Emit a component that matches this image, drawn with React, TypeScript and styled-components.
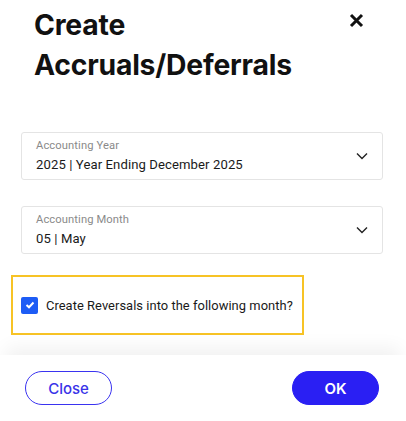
import React from "react"
import styled, { createGlobalStyle } from "styled-components"

const GlobalStyle = createGlobalStyle`
  html, body {
    margin: 0;
    padding: 0;
    background: #ffffff;
  }
  body {
    font-family: "Roboto", "Liberation Sans", sans-serif;
    color: #1a1a1a;
  }
`

const Dialog = styled.div`
  width: 406px;
  height: 421px;
  display: flex;
  flex-direction: column;
  background: #fff;
  overflow: hidden;
`

const Header = styled.div`
  display: flex;
  justify-content: space-between;
  align-items: flex-start;
  padding: 5px 42px 0 34px;
`

const Title = styled.h1`
  margin: 0;
  font-family: "Inter", "Liberation Sans", sans-serif;
  font-size: 28.3px;
  font-weight: 700;
  line-height: 40px;
  color: #111;
  letter-spacing: -0.2px;
`

const CloseIcon = styled.button`
  border: none;
  background: none;
  padding: 0;
  margin-top: 8px;
  width: 15px;
  height: 15px;
  cursor: pointer;
  display: flex;
`

const Body = styled.div`
  flex: 1;
  display: flex;
  flex-direction: column;
  padding: 47px 23px 0 21px;
`

const Field = styled.div`
  display: flex;
  align-items: center;
  justify-content: space-between;
  height: 46px;
  border: 1px solid #e4e4e4;
  border-radius: 3px;
  padding: 0 14px;
  margin-bottom: 26px;
`

const FieldText = styled.div`
  display: flex;
  flex-direction: column;
  gap: 3px;
`

const Label = styled.span`
  font-size: 11.2px;
  color: #8a8a8a;
  line-height: 14px;
  letter-spacing: 0.1px;
`

const Value = styled.span`
  font-size: 13.1px;
  color: #1a1a1a;
  line-height: 18px;
  letter-spacing: 0.1px;
`

const Highlight = styled.label`
  display: flex;
  align-items: center;
  gap: 8px;
  width: 293px;
  height: 60px;
  margin-left: -10px;
  margin-top: -5px;
  padding-left: 8px;
  border: 2px solid #f7c325;
  box-sizing: border-box;
`

const Box = styled.span`
  flex-shrink: 0;
  width: 17px;
  height: 17px;
  border-radius: 2px;
  background: #1d5cf5;
  display: flex;
  align-items: center;
  justify-content: center;
`

const CheckText = styled.span`
  font-size: 12.9px;
  color: #1a1a1a;
  white-space: nowrap;
  letter-spacing: 0.05px;
`

const Footer = styled.div`
  height: 66px;
  display: flex;
  align-items: center;
  justify-content: space-between;
  padding: 0 27px 0 25px;
  background: #fff;
  box-shadow: 0 -14px 18px -6px rgba(0, 0, 0, 0.055);
`

const Button = styled.button<{ $primary?: boolean }>`
  width: 87px;
  height: 34px;
  border-radius: 17px;
  font-family: "Inter", "Liberation Sans", sans-serif;
  font-size: 15px;
  font-weight: ${(p) => (p.$primary ? 600 : 500)};
  cursor: pointer;
  border: 1.5px solid;
  background: ${(p) => (p.$primary ? "#2a1ff3" : "#fff")};
  color: ${(p) => (p.$primary ? "#fff" : "#3a33e8")};
  border-color: ${(p) => (p.$primary ? "#2a1ff3" : "#3a33f0")};
`

const Chevron = () => (
  <svg width="12" height="8" viewBox="0 0 12 8" fill="none">
    <path d="M1 1.5L6 6.5L11 1.5" stroke="#222" strokeWidth="1.4" />
  </svg>
)

const SelectField = ({ label, value }: { label: string; value: string }) => (
  <Field>
    <FieldText>
      <Label>{label}</Label>
      <Value>{value}</Value>
    </FieldText>
    <Chevron />
  </Field>
)

const App = (): JSX.Element => {
  return (
    <>
      <GlobalStyle />
      <Dialog>
        <Header>
          <Title>
            Create
            <br />
            Accruals/Deferrals
          </Title>
          <CloseIcon aria-label="Close">
            <svg width="15" height="15" viewBox="0 0 15 15">
              <path d="M2 2L13 13M13 2L2 13" stroke="#111" strokeWidth="3" />
            </svg>
          </CloseIcon>
        </Header>
        <Body>
          <SelectField label="Accounting Year" value="2025 | Year Ending December 2025" />
          <SelectField label="Accounting Month" value="05 | May" />
          <Highlight>
            <Box>
              <svg width="10" height="8" viewBox="0 0 10 8">
                <path d="M1.5 4L4 6.3L8.5 1.5" stroke="#fff" strokeWidth="2" fill="none" />
              </svg>
            </Box>
            <CheckText>Create Reversals into the following month?</CheckText>
          </Highlight>
        </Body>
        <Footer>
          <Button>Close</Button>
          <Button $primary>OK</Button>
        </Footer>
      </Dialog>
    </>
  )
}

export default App
